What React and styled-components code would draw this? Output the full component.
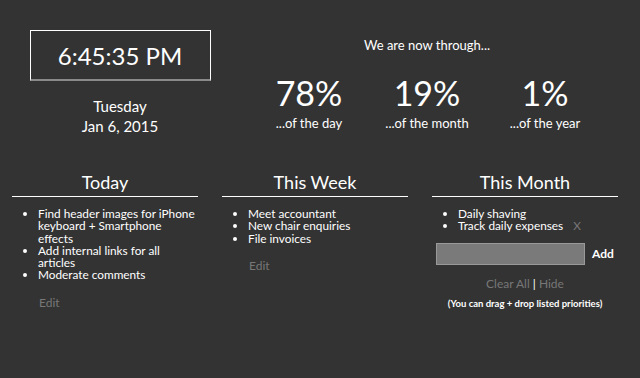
import React from "react";
import styled, { createGlobalStyle } from "styled-components";

const GlobalStyle = createGlobalStyle`
  body {
    margin: 0;
    background: #333333;
    color: #ffffff;
    font-family: "Lato", "Open Sans", sans-serif;
  }
`;

const todos = {
  today: [
    "Find header images for iPhone keyboard + Smartphone effects",
    "Add internal links for all articles",
    "Moderate comments",
  ],
  week: ["Meet accountant", "New chair enquiries", "File invoices"],
  month: ["Daily shaving", "Track daily expenses"],
};

const stats = [
  { value: "78%", label: "...of the day" },
  { value: "19%", label: "...of the month" },
  { value: "1%", label: "...of the year" },
];

function App() {
  return (
    <Page>
      <GlobalStyle />
      <Top>
        <ClockSide>
          <ClockBox>6:45:35 PM</ClockBox>
          <DateText>
            Tuesday
            <br />
            Jan 6, 2015
          </DateText>
        </ClockSide>
        <Progress>
          <Through>We are now through...</Through>
          <Stats>
            {stats.map((s) => (
              <Stat key={s.label}>
                <Percent>{s.value}</Percent>
                <StatLabel>{s.label}</StatLabel>
              </Stat>
            ))}
          </Stats>
        </Progress>
      </Top>

      <Columns>
        <Column>
          <Heading>Today</Heading>
          <List>
            {todos.today.map((t) => (
              <li key={t}>{t}</li>
            ))}
          </List>
          <EditLink>Edit</EditLink>
        </Column>

        <Column>
          <Heading>This Week</Heading>
          <List>
            {todos.week.map((t) => (
              <li key={t}>{t}</li>
            ))}
          </List>
          <EditLink>Edit</EditLink>
        </Column>

        <Column>
          <Heading>This Month</Heading>
          <List>
            <li>{todos.month[0]}</li>
            <li>
              {todos.month[1]}
              <Remove>X</Remove>
            </li>
          </List>
          <AddRow>
            <AddInput type="text" />
            <AddButton>Add</AddButton>
          </AddRow>
          <Actions>
            <Muted>Clear All</Muted> | <Muted>Hide</Muted>
          </Actions>
          <Hint>(You can drag + drop listed priorities)</Hint>
        </Column>
      </Columns>
    </Page>
  );
}

export default App;

const Page = styled.div`
  width: 640px;
  height: 378px;
  padding-top: 30px;
  box-sizing: border-box;
`;

const Top = styled.div`
  display: flex;
`;

const ClockSide = styled.div`
  width: 240px;
  display: flex;
  flex-direction: column;
  align-items: center;
`;

const ClockBox = styled.div`
  width: 181px;
  height: 51px;
  box-sizing: border-box;
  border: 1px solid #ffffff;
  border-bottom: 2px solid #8a8a8a;
  display: flex;
  align-items: center;
  justify-content: center;
  font-size: 24px;
  padding-top: 1px;
`;

const DateText = styled.div`
  margin-top: 15px;
  font-size: 15px;
  line-height: 20px;
  text-align: center;
`;

const Progress = styled.div`
  margin-left: 10px;
  width: 354px;
  padding-top: 7px;
  display: flex;
  flex-direction: column;
  align-items: center;
`;

const Through = styled.div`
  font-size: 13px;
  line-height: 16px;
`;

const Stats = styled.div`
  display: flex;
  margin-top: 18px;
`;

const Stat = styled.div`
  width: 118px;
  text-align: center;
`;

const Percent = styled.div`
  font-size: 34px;
  line-height: 44px;
`;

const StatLabel = styled.div`
  font-size: 13px;
  line-height: 16px;
`;

const Columns = styled.div`
  display: flex;
  gap: 24px;
  padding: 0 12px;
  margin-top: 34px;
`;

const Column = styled.div`
  width: 186px;
`;

const Heading = styled.h2`
  margin: 0;
  font-size: 18px;
  font-weight: normal;
  line-height: 24px;
  text-align: center;
  padding-bottom: 2px;
  border-bottom: 1px solid #ffffff;
`;

const List = styled.ul`
  margin: 11px 0 0;
  padding-left: 26px;
  font-size: 11.8px;
  line-height: 12.3px;
`;

const Remove = styled.span`
  color: #777777;
  margin-left: 10px;
`;

const EditLink = styled.div`
  margin: 14px 0 0 27px;
  font-size: 12px;
  line-height: 14px;
  color: #777777;
`;

const AddRow = styled.div`
  display: flex;
  align-items: center;
  margin: 10px 0 0 4px;
`;

const AddInput = styled.input`
  width: 149px;
  height: 22px;
  box-sizing: border-box;
  background: #7a7a7a;
  border: 1px solid #999999;
  outline: none;
`;

const AddButton = styled.span`
  margin-left: 7px;
  font-size: 12px;
  font-weight: bold;
`;

const Actions = styled.div`
  margin-top: 12px;
  text-align: center;
  font-size: 12px;
  line-height: 14px;
`;

const Muted = styled.span`
  color: #777777;
`;

const Hint = styled.div`
  margin-top: 7px;
  text-align: center;
  font-size: 9.5px;
  font-weight: bold;
`;
